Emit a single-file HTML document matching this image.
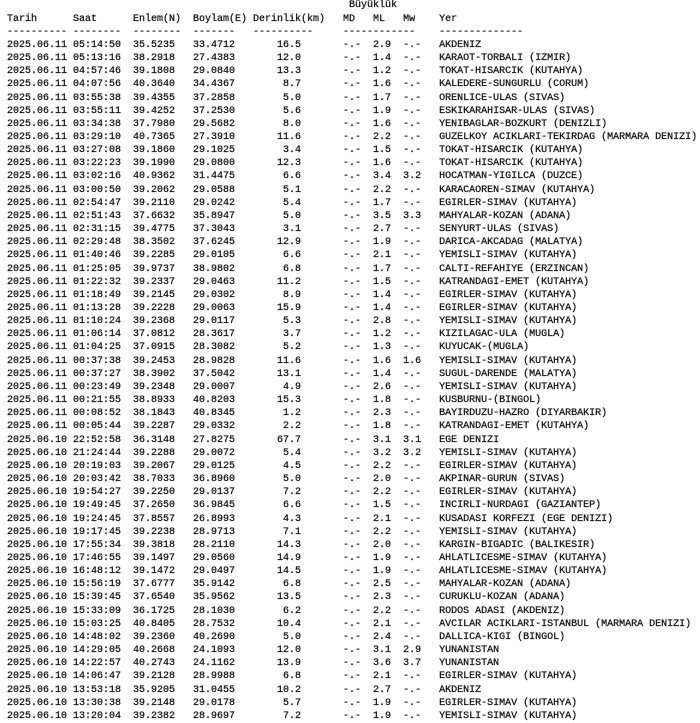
<!DOCTYPE html>
<html><head><meta charset="utf-8"><style>
html,body{margin:0;padding:0;background:#fff;width:700px;height:722px;overflow:hidden}
pre{position:absolute;left:7px;top:-0.6px;margin:0;font-family:"Liberation Mono","DejaVu Sans Mono",monospace;font-size:10px;line-height:13.16px;color:#111;-webkit-text-stroke:0.25px #111}
</style></head><body><pre>                                                         Büyüklük
Tarih      Saat      Enlem(N)  Boylam(E) Derinlik(km)   MD   ML   Mw    Yer
---------- --------  --------  -------   ----------     ------------    --------------
2025.06.11 05:14:50  35.5235   33.4712       16.5       -.-  2.9  -.-   AKDENIZ
2025.06.11 05:13:16  38.2918   27.4383       12.0       -.-  1.4  -.-   KARAOT-TORBALI (IZMIR)
2025.06.11 04:57:46  39.1808   29.0840       13.3       -.-  1.2  -.-   TOKAT-HISARCIK (KUTAHYA)
2025.06.11 04:07:56  40.3640   34.4367        8.7       -.-  1.6  -.-   KALEDERE-SUNGURLU (CORUM)
2025.06.11 03:55:38  39.4355   37.2858        5.0       -.-  1.7  -.-   ORENLICE-ULAS (SIVAS)
2025.06.11 03:55:11  39.4252   37.2530        5.6       -.-  1.9  -.-   ESKIKARAHISAR-ULAS (SIVAS)
2025.06.11 03:34:38  37.7980   29.5682        8.0       -.-  1.6  -.-   YENIBAGLAR-BOZKURT (DENIZLI)
2025.06.11 03:29:10  40.7365   27.3910       11.6       -.-  2.2  -.-   GUZELKOY ACIKLARI-TEKIRDAG (MARMARA DENIZI)
2025.06.11 03:27:08  39.1860   29.1025        3.4       -.-  1.5  -.-   TOKAT-HISARCIK (KUTAHYA)
2025.06.11 03:22:23  39.1990   29.0800       12.3       -.-  1.6  -.-   TOKAT-HISARCIK (KUTAHYA)
2025.06.11 03:02:16  40.9362   31.4475        6.6       -.-  3.4  3.2   HOCATMAN-YIGILCA (DUZCE)
2025.06.11 03:00:50  39.2062   29.0588        5.1       -.-  2.2  -.-   KARACAOREN-SIMAV (KUTAHYA)
2025.06.11 02:54:47  39.2110   29.0242        5.4       -.-  1.7  -.-   EGIRLER-SIMAV (KUTAHYA)
2025.06.11 02:51:43  37.6632   35.8947        5.0       -.-  3.5  3.3   MAHYALAR-KOZAN (ADANA)
2025.06.11 02:31:15  39.4775   37.3043        3.1       -.-  2.7  -.-   SENYURT-ULAS (SIVAS)
2025.06.11 02:29:48  38.3502   37.6245       12.9       -.-  1.9  -.-   DARICA-AKCADAG (MALATYA)
2025.06.11 01:40:46  39.2285   29.0105        6.6       -.-  2.1  -.-   YEMISLI-SIMAV (KUTAHYA)
2025.06.11 01:25:05  39.9737   38.9802        6.8       -.-  1.7  -.-   CALTI-REFAHIYE (ERZINCAN)
2025.06.11 01:22:32  39.2337   29.0463       11.2       -.-  1.5  -.-   KATRANDAGI-EMET (KUTAHYA)
2025.06.11 01:18:49  39.2145   29.0302        8.9       -.-  1.4  -.-   EGIRLER-SIMAV (KUTAHYA)
2025.06.11 01:13:28  39.2228   29.0063       15.9       -.-  1.4  -.-   EGIRLER-SIMAV (KUTAHYA)
2025.06.11 01:10:24  39.2368   29.0117        5.3       -.-  2.8  -.-   YEMISLI-SIMAV (KUTAHYA)
2025.06.11 01:06:14  37.0812   28.3617        3.7       -.-  1.2  -.-   KIZILAGAC-ULA (MUGLA)
2025.06.11 01:04:25  37.0915   28.3082        5.2       -.-  1.3  -.-   KUYUCAK-(MUGLA)
2025.06.11 00:37:38  39.2453   28.9828       11.6       -.-  1.6  1.6   YEMISLI-SIMAV (KUTAHYA)
2025.06.11 00:37:27  38.3902   37.5042       13.1       -.-  1.4  -.-   SUGUL-DARENDE (MALATYA)
2025.06.11 00:23:49  39.2348   29.0007        4.9       -.-  2.6  -.-   YEMISLI-SIMAV (KUTAHYA)
2025.06.11 00:21:55  38.8933   40.8203       15.3       -.-  1.8  -.-   KUSBURNU-(BINGOL)
2025.06.11 00:08:52  38.1843   40.8345        1.2       -.-  2.3  -.-   BAYIRDUZU-HAZRO (DIYARBAKIR)
2025.06.11 00:05:44  39.2287   29.0332        2.2       -.-  1.8  -.-   KATRANDAGI-EMET (KUTAHYA)
2025.06.10 22:52:58  36.3148   27.8275       67.7       -.-  3.1  3.1   EGE DENIZI
2025.06.10 21:24:44  39.2288   29.0072        5.4       -.-  3.2  3.2   YEMISLI-SIMAV (KUTAHYA)
2025.06.10 20:19:03  39.2067   29.0125        4.5       -.-  2.2  -.-   EGIRLER-SIMAV (KUTAHYA)
2025.06.10 20:03:42  38.7033   36.8960        5.0       -.-  2.0  -.-   AKPINAR-GURUN (SIVAS)
2025.06.10 19:54:27  39.2250   29.0137        7.2       -.-  2.2  -.-   EGIRLER-SIMAV (KUTAHYA)
2025.06.10 19:49:45  37.2650   36.9845        6.6       -.-  1.5  -.-   INCIRLI-NURDAGI (GAZIANTEP)
2025.06.10 19:24:45  37.8557   26.8993        4.3       -.-  2.1  -.-   KUSADASI KORFEZI (EGE DENIZI)
2025.06.10 19:17:45  39.2238   28.9713        7.1       -.-  2.2  -.-   YEMISLI-SIMAV (KUTAHYA)
2025.06.10 17:55:34  39.3818   28.2110       14.3       -.-  2.0  -.-   KARGIN-BIGADIC (BALIKESIR)
2025.06.10 17:46:55  39.1497   29.0560       14.9       -.-  1.9  -.-   AHLATLICESME-SIMAV (KUTAHYA)
2025.06.10 16:48:12  39.1472   29.0497       14.5       -.-  1.9  -.-   AHLATLICESME-SIMAV (KUTAHYA)
2025.06.10 15:56:19  37.6777   35.9142        6.8       -.-  2.5  -.-   MAHYALAR-KOZAN (ADANA)
2025.06.10 15:39:45  37.6540   35.9562       13.5       -.-  2.3  -.-   CURUKLU-KOZAN (ADANA)
2025.06.10 15:33:09  36.1725   28.1030        6.2       -.-  2.2  -.-   RODOS ADASI (AKDENIZ)
2025.06.10 15:03:25  40.8405   28.7532       10.4       -.-  2.1  -.-   AVCILAR ACIKLARI-ISTANBUL (MARMARA DENIZI)
2025.06.10 14:48:02  39.2360   40.2690        5.0       -.-  2.4  -.-   DALLICA-KIGI (BINGOL)
2025.06.10 14:29:05  40.2668   24.1093       12.0       -.-  3.1  2.9   YUNANISTAN
2025.06.10 14:22:57  40.2743   24.1162       13.9       -.-  3.6  3.7   YUNANISTAN
2025.06.10 14:06:47  39.2128   28.9988        6.8       -.-  2.1  -.-   EGIRLER-SIMAV (KUTAHYA)
2025.06.10 13:53:18  35.9205   31.0455       10.2       -.-  2.7  -.-   AKDENIZ
2025.06.10 13:30:38  39.2148   29.0178        5.7       -.-  1.9  -.-   EGIRLER-SIMAV (KUTAHYA)
2025.06.10 13:20:04  39.2382   28.9697        7.2       -.-  1.9  -.-   YEMISLI-SIMAV (KUTAHYA)</pre></body></html>
